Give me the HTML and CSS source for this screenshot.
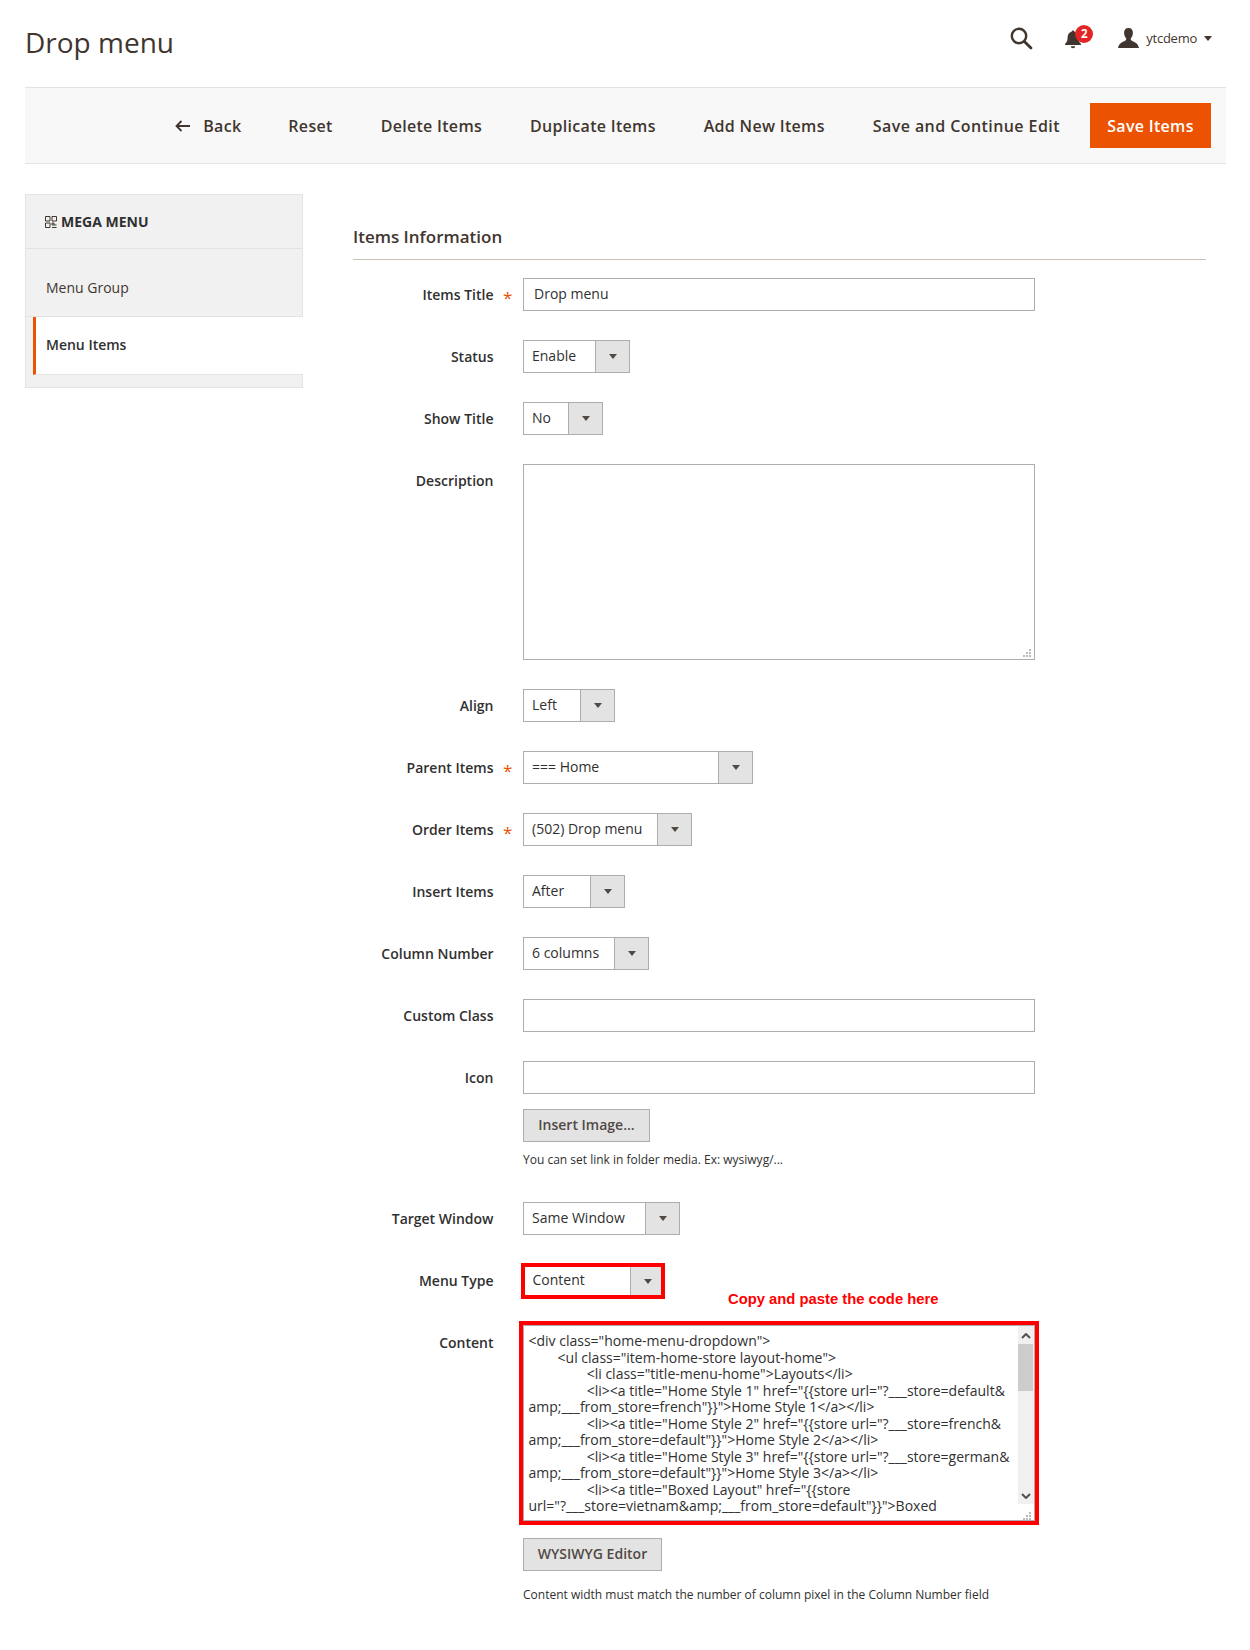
FILE: index.html
```html
<!DOCTYPE html>
<html lang="en">
<head>
<meta charset="utf-8">
<title>Drop menu</title>
<link rel="stylesheet" href="styles.css">
</head>
<body>
<div class="page">
  <header class="top">
    <h1 class="page-title">Drop menu</h1>
    <div class="top-tools">
      <svg class="icon-search" width="24" height="24" viewBox="0 0 24 24"><circle cx="10" cy="10" r="7.2" fill="none" stroke="#41362f" stroke-width="2.4"/><path d="M15.4 15.4 L22 22" stroke="#41362f" stroke-width="2.8" stroke-linecap="round"/></svg>
      <div class="bell">
        <svg width="18" height="20" viewBox="0 0 18 20"><path d="M9 1.5c-.9 0-1.4.6-1.4 1.3C4.9 3.5 3.6 5.6 3.6 8.5c0 3.300-1 5-2.600 6.500v1h16v-1c-1.600-1.500-2.600-3.200-2.600-6.500 0-2.900-1.300-5-4-5.700C10.400 2.100 9.900 1.500 9 1.500z" fill="#41362f"/><path d="M6.800 17.200a2.200 2 0 0 0 4.400 0z" fill="#41362f"/></svg>
        <span class="badge">2</span>
      </div>
      <div class="user">
        <svg width="21" height="20" viewBox="0 0 21 20"><path d="M10.500 0c-3 0-4.600 2-4.400 5 .1 2 .9 4 2 5.200.3.900.1 1.800-.6 2.300C5.600 13.600 1 14.600 0 20h21c-1-5.400-5.600-6.400-7.500-7.500-.7-.5-.9-1.400-.6-2.300 1.100-1.200 1.900-3.200 2-5.200.2-3-1.400-5-4.400-5z" fill="#41362f"/></svg>
        <span class="user-name">ytcdemo</span>
        <span class="caret"></span>
      </div>
    </div>
  </header>

  <nav class="actions">
    <a class="action action-back"><svg width="16" height="12" viewBox="0 0 16 12"><path d="M15 6H2M6.500 1 1.500 6l5 5" fill="none" stroke="#41362f" stroke-width="1.800"/></svg><span>Back</span></a>
    <a class="action">Reset</a>
    <a class="action">Delete Items</a>
    <a class="action">Duplicate Items</a>
    <a class="action">Add New Items</a>
    <a class="action action-last">Save and Continue Edit</a>
    <a class="save">Save Items</a>
  </nav>

  <div class="layout">
    <aside class="side">
      <div class="side-head">
        <svg width="12" height="12" viewBox="0 0 12 12"><path d="M.5.500h4.500v4.500H.5zM7 .500h4.500v4.500H7zM.5 7h4.500v4.500H.5zM7 7h2v2H7zM9 9h2.500M7 11.500h4.500" fill="none" stroke="#41362f" stroke-width="1"/></svg>
        <span>MEGA MENU</span>
      </div>
      <a class="side-link">Menu Group</a>
      <a class="side-link side-active">Menu Items</a>
    </aside>

    <main class="content">
      <h2 class="section-title">Items Information</h2>

      <div class="row">
        <label class="label">Items Title</label><span class="star">*</span>
        <input class="input" type="text" value="Drop menu">
      </div>
      <div class="row">
        <label class="label">Status</label><span class="star"></span>
        <div class="select"><select class="w72"><option>Enable</option></select><span class="arrow"></span></div>
      </div>
      <div class="row">
        <label class="label">Show Title</label><span class="star"></span>
        <div class="select"><select class="w45"><option>No</option></select><span class="arrow"></span></div>
      </div>
      <div class="row">
        <label class="label">Description</label><span class="star"></span>
        <div class="area-wrap">
          <textarea class="area"></textarea>
          <svg class="grip" width="8" height="8" viewBox="0 0 8 8"><path d="M6 0h2v2H6zM3 3h2v2H3zM6 3h2v2H6zM0 6h2v2H0zM3 6h2v2H3zM6 6h2v2H6z" fill="#bbb"/></svg>
        </div>
      </div>
      <div class="row">
        <label class="label">Align</label><span class="star"></span>
        <div class="select"><select class="w57"><option>Left</option></select><span class="arrow"></span></div>
      </div>
      <div class="row">
        <label class="label">Parent Items</label><span class="star">*</span>
        <div class="select"><select class="w195"><option>=== Home</option></select><span class="arrow"></span></div>
      </div>
      <div class="row">
        <label class="label">Order Items</label><span class="star">*</span>
        <div class="select"><select class="w134"><option>(502) Drop menu</option></select><span class="arrow"></span></div>
      </div>
      <div class="row">
        <label class="label">Insert Items</label><span class="star"></span>
        <div class="select"><select class="w67"><option>After</option></select><span class="arrow"></span></div>
      </div>
      <div class="row">
        <label class="label">Column Number</label><span class="star"></span>
        <div class="select"><select class="w91"><option>6 columns</option></select><span class="arrow"></span></div>
      </div>
      <div class="row">
        <label class="label">Custom Class</label><span class="star"></span>
        <input class="input" type="text">
      </div>
      <div class="row row-tight">
        <label class="label">Icon</label><span class="star"></span>
        <div class="stack">
          <input class="input" type="text">
          <button class="btn btn-image" type="button">Insert Image...</button>
          <p class="note note-image">You can set link in folder media. Ex: wysiwyg/...</p>
        </div>
      </div>
      <div class="row">
        <label class="label">Target Window</label><span class="star"></span>
        <div class="select"><select class="w122"><option>Same Window</option></select><span class="arrow"></span></div>
      </div>
      <div class="row">
        <label class="label">Menu Type</label><span class="star"></span>
        <div class="select select-marked"><select class="w106"><option>Content</option></select><span class="arrow"></span></div>
        <span class="hint">Copy and paste the code here</span>
      </div>
      <div class="row row-tight">
        <label class="label">Content</label><span class="star"></span>
        <div class="stack">
          <div class="marked">
<textarea class="area area-code" wrap="off">&lt;div class="home-menu-dropdown"&gt;
	&lt;ul class="item-home-store layout-home"&gt;
		&lt;li class="title-menu-home"&gt;Layouts&lt;/li&gt;
		&lt;li&gt;&lt;a title="Home Style 1" href="{{store url="?___store=default&amp;
amp;___from_store=french"}}"&gt;Home Style 1&lt;/a&gt;&lt;/li&gt;
		&lt;li&gt;&lt;a title="Home Style 2" href="{{store url="?___store=french&amp;
amp;___from_store=default"}}"&gt;Home Style 2&lt;/a&gt;&lt;/li&gt;
		&lt;li&gt;&lt;a title="Home Style 3" href="{{store url="?___store=german&amp;
amp;___from_store=default"}}"&gt;Home Style 3&lt;/a&gt;&lt;/li&gt;
		&lt;li&gt;&lt;a title="Boxed Layout" href="{{store
url="?___store=vietnam&amp;amp;___from_store=default"}}"&gt;Boxed</textarea>
            <div class="scrollbar">
              <svg class="chevron-up" width="10" height="6" viewBox="0 0 10 6"><path d="M1 5l4-4 4 4" fill="none" stroke="#505050" stroke-width="2"/></svg>
              <span class="thumb"></span>
              <svg class="chevron-down" width="10" height="6" viewBox="0 0 10 6"><path d="M1 1l4 4 4-4" fill="none" stroke="#505050" stroke-width="2"/></svg>
            </div>
            <svg class="grip grip-code" width="8" height="8" viewBox="0 0 8 8"><path d="M6 0h2v2H6zM3 3h2v2H3zM6 3h2v2H6zM0 6h2v2H0zM3 6h2v2H3zM6 6h2v2H6z" fill="#bbb"/></svg>
          </div>
          <button class="btn btn-wysiwyg" type="button">WYSIWYG Editor</button>
          <p class="note note-content">Content width must match the number of column pixel in the Column Number field</p>
        </div>
      </div>
    </main>
  </div>
</div>
</body>
</html>
```
FILE: styles.css
```css
* { box-sizing: border-box; }
html, body { margin: 0; padding: 0; background: #fff; }
body { font-family: "Open Sans", sans-serif; font-size: 14px; color: #41362f; }
.page { padding: 0 24px 0 25px; width: 1250px; }

.top { display: flex; justify-content: space-between; height: 87px; }
.page-title { margin: 22px 0 0; font-size: 28px; line-height: 40px; font-weight: 400; color: #41362f; }
.top-tools { display: flex; align-items: flex-start; padding: 26px 14px 0 0; }
.icon-search { margin-right: 31px; margin-top: 0; }
.bell { position: relative; width: 18px; height: 20px; margin-top: 3px; margin-right: 36px; }
.badge { position: absolute; left: 11px; top: -4px; width: 18px; height: 18px; border-radius: 50%; background: #e22626; color: #fff; font-size: 11.5px; font-weight: 700; line-height: 18px; text-align: center; }
.user { display: flex; align-items: center; height: 24px; }
.user-name { margin-left: 7px; font-size: 13px; letter-spacing: -.25px; color: #41362f; }
.caret { margin-left: 7px; width: 0; height: 0; border-left: 4px solid transparent; border-right: 4px solid transparent; border-top: 5px solid #41362f; }

.actions { display: flex; justify-content: flex-end; align-items: center; height: 77px; padding-right: 15px; background: #f8f8f8; border-top: 1px solid #e3e3e3; border-bottom: 1px solid #e3e3e3; }
.action { margin-right: 48px; font-size: 16px; font-weight: 600; letter-spacing: .3px; color: #41362f; }
.action-last { margin-right: 30px; letter-spacing: .43px; }
.action-back { display: flex; align-items: center; gap: 12px; margin-right: 47px; }
.save { display: block; width: 121px; height: 45px; background: #eb5202; color: #fff; font-size: 16px; font-weight: 600; letter-spacing: .3px; line-height: 46px; text-align: center; }

.layout { display: flex; align-items: flex-start; margin-top: 30px; }
.side { flex: 0 0 278px; background: #f1f1f1; border: 1px solid #e3e3e3; padding-bottom: 12px; }
.side-head { display: flex; align-items: center; gap: 4px; height: 54px; padding-left: 19px; font-weight: 700; color: #303030; border-bottom: 1px solid #e3e3e3; }
.side-link { display: block; color: #41362f; }
.side-link:not(.side-active) { height: 68px; padding: 29px 0 0 20px; line-height: 20px; border-bottom: 1px solid #e3e3e3; }
.side-active { margin: 0 -1px 0 7px; height: 58px; padding: 18px 0 0 10px; line-height: 20px; font-weight: 600; color: #303030; background: #fff; border-left: 3px solid #eb5202; border-bottom: 1px solid #e3e3e3; }

.content { margin-left: 50px; width: 853px; }
.section-title { margin: 0 0 18px; height: 66px; padding-top: 33px; font-size: 17px; line-height: 20px; font-weight: 600; color: #41362f; border-bottom: 1px solid #cac3b4; }

.row { position: relative; display: flex; align-items: flex-start; margin-bottom: 29px; }
.row-tight { margin-bottom: 0; }
.label { flex: 0 0 140.5px; padding-top: 7px; line-height: 19px; text-align: right; font-weight: 600; color: #303030; }
.star { flex: 0 0 29.5px; padding: 10px 0 0 9.5px; line-height: 19px; color: #eb5202; font-size: 17px; }

.input { display: block; width: 512px; height: 33px; padding: 0 10px 2px; border: 1px solid #adadad; background: #fff; font: 14px "Open Sans", sans-serif; color: #303030; border-radius: 0; outline: none; }
.area-wrap { position: relative; }
.area { display: block; width: 512px; height: 196px; margin: 0; border: 1px solid #adadad; background: #fff; border-radius: 0; outline: none; font: 14px/16.5px "Open Sans", sans-serif; color: #303030; padding: 5px; resize: none; overflow: hidden; }
.area-code { padding: 7px 5px 5px 4.5px; white-space: pre; }
.grip { position: absolute; right: 4px; bottom: 3px; }
.grip-code { right: 4px; bottom: 1px; }

.select { display: flex; height: 33px; border: 1px solid #adadad; background: #fff; }
.select select { display: block; height: 31px; padding: 0 0 2px 8px; border: 0; border-right: 1px solid #adadad; border-radius: 0; background: #fff; appearance: none; -webkit-appearance: none; font: 14px "Open Sans", sans-serif; color: #303030; outline: none; }
.arrow { position: relative; flex: 0 0 33px; background: #e3e3e3; }
.arrow::after { content: ""; position: absolute; left: 13px; top: 13px; border-left: 4px solid transparent; border-right: 4px solid transparent; border-top: 5px solid #514943; }
.w45 { width: 45px; }
.w57 { width: 57px; }
.w67 { width: 67px; }
.w72 { width: 72px; }
.w91 { width: 91px; }
.w106 { width: 106px; }
.w122 { width: 122px; }
.w134 { width: 134px; }
.w195 { width: 195px; }

.select-marked { margin: -1px 0 -2px -2px; height: 36px; border: 4px solid #f00; }
.select-marked select { height: 28px; padding: 0 0 3px 7.5px; }
.select-marked .arrow { flex-basis: 30px; }
.select-marked .arrow::after { left: 13px; top: 12px; }
.hint { position: absolute; left: 375px; top: 26px; font: 700 14.8px/18px "Liberation Sans", sans-serif; color: #f00; }

.stack { display: flex; flex-direction: column; align-items: flex-start; }
.marked { position: relative; margin: -5px -4px 0; border: 4px solid #f00; background: #fff; }
.scrollbar { position: absolute; right: 1px; top: 1px; width: 16px; height: 178px; background: #f0f0f0; }
.thumb { position: absolute; left: 0; top: 18px; width: 15px; height: 47px; background: #ccc; }
.chevron-up { position: absolute; left: 3px; top: 7px; }
.chevron-down { position: absolute; left: 3px; bottom: 5px; }
.btn { display: block; padding: 0 0 2px; border: 1px solid #adadad; background: #e3e3e3; font: 600 14px "Open Sans", sans-serif; color: #514943; border-radius: 0; }
.btn-image { margin-top: 15px; width: 127px; height: 33px; }
.btn-wysiwyg { margin-top: 13px; width: 139px; height: 33px; }
.note { margin: 0; font-size: 12px; line-height: 16px; color: #303030; }
.note-image { margin-top: 10px; margin-bottom: 34px; }
.note-content { margin-top: 16px; margin-bottom: 40px; }
```
